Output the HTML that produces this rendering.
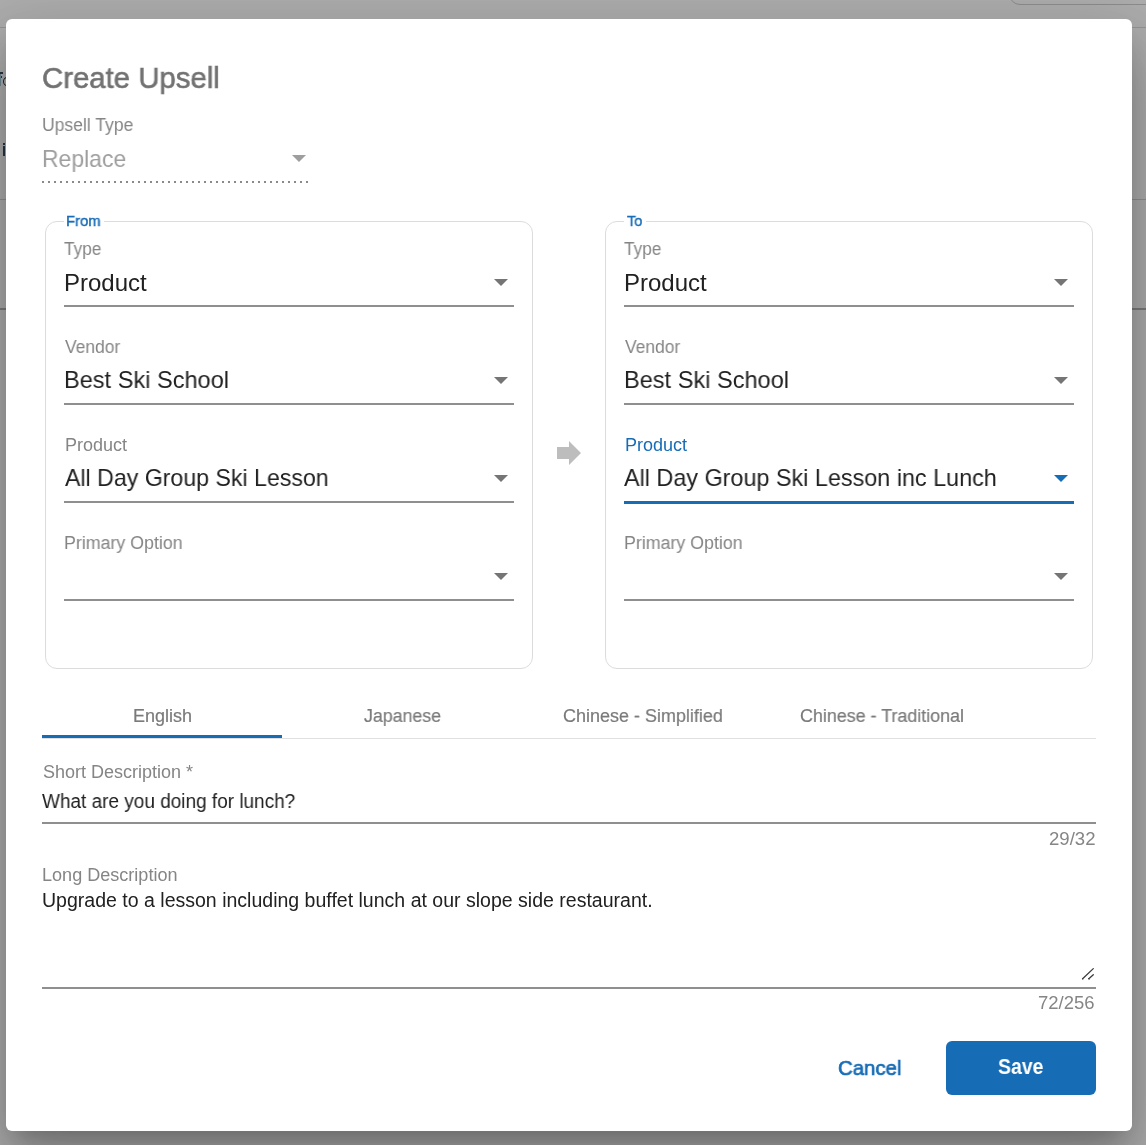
<!DOCTYPE html>
<html><head><meta charset="utf-8">
<style>
html,body{margin:0;padding:0}
body{width:1146px;height:1145px;overflow:hidden;position:relative;background:#adadad;font-family:"Liberation Sans",sans-serif}
.abs{position:absolute}
.t{position:absolute;white-space:nowrap;line-height:1;transform-origin:0 0;will-change:transform}
.dlg{position:absolute;left:6px;top:19px;width:1126px;height:1112px;background:#fff;border-radius:6px;
 box-shadow:0 16px 22px -10px rgba(0,0,0,.2),0 40px 57px 4px rgba(0,0,0,.16),0 16px 69px 12px rgba(0,0,0,.12)}
.ul{position:absolute;height:2px;background:#8f8f8f}
.fs{position:absolute;border:1px solid #dcdcdc;border-radius:12px;box-sizing:border-box}
.leg{position:absolute;background:#fff;height:4px}
.arr{position:absolute;width:0;height:0;border-left:7px solid transparent;border-right:7px solid transparent;border-top:7px solid #757575}
</style></head><body>
<!-- underlying page bits -->
<div class="abs" style="left:1009px;top:-21px;width:200px;height:24px;border:1px solid #8c8c8c;border-radius:11px"></div>
<div class="abs" style="left:0;top:27px;width:1146px;height:1px;background:#959595"></div>
<div class="abs" style="left:0;top:199px;width:1146px;height:1px;background:#909090"></div>
<div class="abs" style="left:0;top:308px;width:1146px;height:2px;background:#7c7c7c"></div>

<div class="abs" style="left:0;top:72px;width:3px;height:2px;background:#2b3545"></div>
<div class="abs" style="left:0;top:76px;width:2px;height:2px;background:#30363f"></div>
<div class="abs" style="left:0;top:74px;width:1px;height:12px;background:#6f8797"></div>
<div class="abs" style="left:3px;top:77px;width:8px;height:9px;border:1.5px solid #1f242c;border-radius:50%;box-sizing:border-box"></div>
<div class="abs" style="left:3px;top:143px;width:2px;height:2px;background:#2b3545"></div>
<div class="abs" style="left:3px;top:146px;width:2px;height:10px;background:#2b3545"></div>
<div class="dlg"></div>

<!-- upsell type -->
<div class="arr" style="left:292px;top:155px;border-top-color:#9e9e9e"></div>
<div class="abs" style="left:42px;top:181px;width:266px;height:2px;background:repeating-linear-gradient(to right,#8a8a8a 0 2px,transparent 2px 6px)"></div>

<!-- fieldsets -->
<div class="fs" style="left:45px;top:221px;width:488px;height:448px"></div>
<div class="leg" style="left:64px;top:219px;width:40px"></div>
<div class="fs" style="left:605px;top:221px;width:488px;height:448px"></div>
<div class="leg" style="left:624px;top:219px;width:22px"></div>

<!-- From fields -->
<div class="arr" style="left:494px;top:279px"></div>
<div class="ul" style="left:64px;top:305px;width:450px"></div>
<div class="arr" style="left:494px;top:377px"></div>
<div class="ul" style="left:64px;top:403px;width:450px"></div>
<div class="arr" style="left:494px;top:475px"></div>
<div class="ul" style="left:64px;top:501px;width:450px"></div>
<div class="arr" style="left:494px;top:573px"></div>
<div class="ul" style="left:64px;top:599px;width:450px"></div>

<!-- center arrow -->
<svg class="abs" style="left:551px;top:435px" width="36" height="36" viewBox="0 0 24 24"><path d="M12 8V4l8 8-8 8v-4H4V8z" fill="#bdbdbd"/></svg>

<!-- To fields -->
<div class="arr" style="left:1054px;top:279px"></div>
<div class="ul" style="left:624px;top:305px;width:450px"></div>
<div class="arr" style="left:1054px;top:377px"></div>
<div class="ul" style="left:624px;top:403px;width:450px"></div>
<div class="arr" style="left:1054px;top:475px;border-top-color:#176cb6"></div>
<div class="ul" style="left:624px;top:501px;width:450px;height:3px;background:#176cb6"></div>
<div class="arr" style="left:1054px;top:573px"></div>
<div class="ul" style="left:624px;top:599px;width:450px"></div>

<!-- tabs -->
<div class="abs" style="left:42px;top:738px;width:1054px;height:1px;background:#e0e0e0"></div>
<div class="abs" style="left:42px;top:735px;width:240px;height:3px;background:#176cb6"></div>

<!-- short desc -->
<div class="ul" style="left:42px;top:822px;width:1054px"></div>

<!-- long desc -->
<svg class="abs" style="left:1080px;top:966px" width="16" height="16"><path d="M2.6 12.8L13.3 2.6M8.8 12.8L13.3 8.7" stroke="#3c3c3c" stroke-width="1.3" stroke-linecap="round"/><path d="M2 12.3L3.2 13.4M8.2 12.3L9.4 13.4" stroke="#3c3c3c" stroke-width="1"/></svg>
<div class="ul" style="left:42px;top:987px;width:1054px"></div>

<!-- buttons -->
<div class="abs" style="left:946px;top:1041px;width:150px;height:54px;background:#176cb6;border-radius:6px"></div>
<div class="t" style="left:42.12px;top:62.80px;font-size:30px;font-weight:normal;color:#727272;transform:scaleX(0.9783);-webkit-text-stroke:0.6px #727272;">Create Upsell</div>
<div class="t" style="left:41.83px;top:115.66px;font-size:18px;font-weight:normal;color:#858585;transform:scaleX(0.9739);">Upsell Type</div>
<div class="t" style="left:42.14px;top:146.68px;font-size:24px;font-weight:normal;color:#9e9e9e;transform:scaleX(0.9561);">Replace</div>
<div class="t" style="left:66.47px;top:212.88px;font-size:15.5px;font-weight:normal;color:#176cb6;transform:scaleX(0.9562);-webkit-text-stroke:0.45px #176cb6;">From</div>
<div class="t" style="left:627.12px;top:212.78px;font-size:15.5px;font-weight:normal;color:#176cb6;transform:scaleX(0.9365);-webkit-text-stroke:0.45px #176cb6;">To</div>
<div class="t" style="left:64.40px;top:239.66px;font-size:18px;font-weight:normal;color:#858585;transform:scaleX(0.9587);">Type</div>
<div class="t" style="left:64.01px;top:270.58px;font-size:24px;font-weight:normal;color:#212121;transform:scaleX(0.9946);">Product</div>
<div class="t" style="left:65.10px;top:337.96px;font-size:18px;font-weight:normal;color:#858585;transform:scaleX(0.9692);">Vendor</div>
<div class="t" style="left:64.12px;top:368.18px;font-size:24px;font-weight:normal;color:#212121;transform:scaleX(0.9816);">Best Ski School</div>
<div class="t" style="left:64.51px;top:435.66px;font-size:18px;font-weight:normal;color:#858585;transform:scaleX(0.9946);">Product</div>
<div class="t" style="left:64.41px;top:533.56px;font-size:18px;font-weight:normal;color:#858585;transform:scaleX(0.9880);">Primary Option</div>
<div class="t" style="left:624.40px;top:239.66px;font-size:18px;font-weight:normal;color:#858585;transform:scaleX(0.9587);">Type</div>
<div class="t" style="left:624.01px;top:270.58px;font-size:24px;font-weight:normal;color:#212121;transform:scaleX(0.9946);">Product</div>
<div class="t" style="left:625.10px;top:337.96px;font-size:18px;font-weight:normal;color:#858585;transform:scaleX(0.9692);">Vendor</div>
<div class="t" style="left:624.12px;top:368.18px;font-size:24px;font-weight:normal;color:#212121;transform:scaleX(0.9816);">Best Ski School</div>
<div class="t" style="left:624.51px;top:435.66px;font-size:18px;font-weight:normal;color:#176cb6;transform:scaleX(0.9946);">Product</div>
<div class="t" style="left:624.41px;top:533.56px;font-size:18px;font-weight:normal;color:#858585;transform:scaleX(0.9880);">Primary Option</div>
<div class="t" style="left:65.00px;top:466.48px;font-size:24px;font-weight:normal;color:#212121;transform:scaleX(0.9643);">All Day Group Ski Lesson</div>
<div class="t" style="left:624.20px;top:466.48px;font-size:24px;font-weight:normal;color:#212121;transform:scaleX(0.9737);">All Day Group Ski Lesson inc Lunch</div>
<div class="t" style="left:132.61px;top:706.66px;font-size:18px;font-weight:normal;color:#7a7a7a;transform:scaleX(0.9943);-webkit-text-stroke:0.2px #7a7a7a;">English</div>
<div class="t" style="left:363.50px;top:706.76px;font-size:18px;font-weight:normal;color:#7a7a7a;transform:scaleX(0.9878);-webkit-text-stroke:0.2px #7a7a7a;">Japanese</div>
<div class="t" style="left:562.50px;top:706.76px;font-size:18px;font-weight:normal;color:#7a7a7a;transform:scaleX(0.9990);-webkit-text-stroke:0.2px #7a7a7a;">Chinese - Simplified</div>
<div class="t" style="left:800.40px;top:706.76px;font-size:18px;font-weight:normal;color:#7a7a7a;transform:scaleX(0.9938);-webkit-text-stroke:0.2px #7a7a7a;">Chinese - Traditional</div>
<div class="t" style="left:42.70px;top:762.56px;font-size:18px;font-weight:normal;color:#858585;transform:scaleX(0.9976);">Short Description *</div>
<div class="t" style="left:42.10px;top:792.19px;font-size:19.5px;font-weight:normal;color:#212121;transform:scaleX(0.9735);">What are you doing for lunch?</div>
<div class="t" style="left:1048.50px;top:829.66px;font-size:18px;font-weight:normal;color:#858585;transform:scaleX(1.0326);">29/32</div>
<div class="t" style="left:42.20px;top:866.36px;font-size:18px;font-weight:normal;color:#858585;transform:scaleX(1.0032);">Long Description</div>
<div class="t" style="left:41.50px;top:890.99px;font-size:19.5px;font-weight:normal;color:#212121;transform:scaleX(1.0011);">Upgrade to a lesson including buffet lunch at our slope side restaurant.</div>
<div class="t" style="left:1037.90px;top:993.56px;font-size:18px;font-weight:normal;color:#858585;transform:scaleX(1.0265);">72/256</div>
<div class="t" style="left:838.48px;top:1057.22px;font-size:21px;font-weight:normal;color:#176cb6;transform:scaleX(0.9701);-webkit-text-stroke:0.7px #176cb6;">Cancel</div>
<div class="t" style="left:998.00px;top:1056.18px;font-size:22px;font-weight:bold;color:#ffffff;transform:scaleX(0.8818);">Save</div>
</body></html>
